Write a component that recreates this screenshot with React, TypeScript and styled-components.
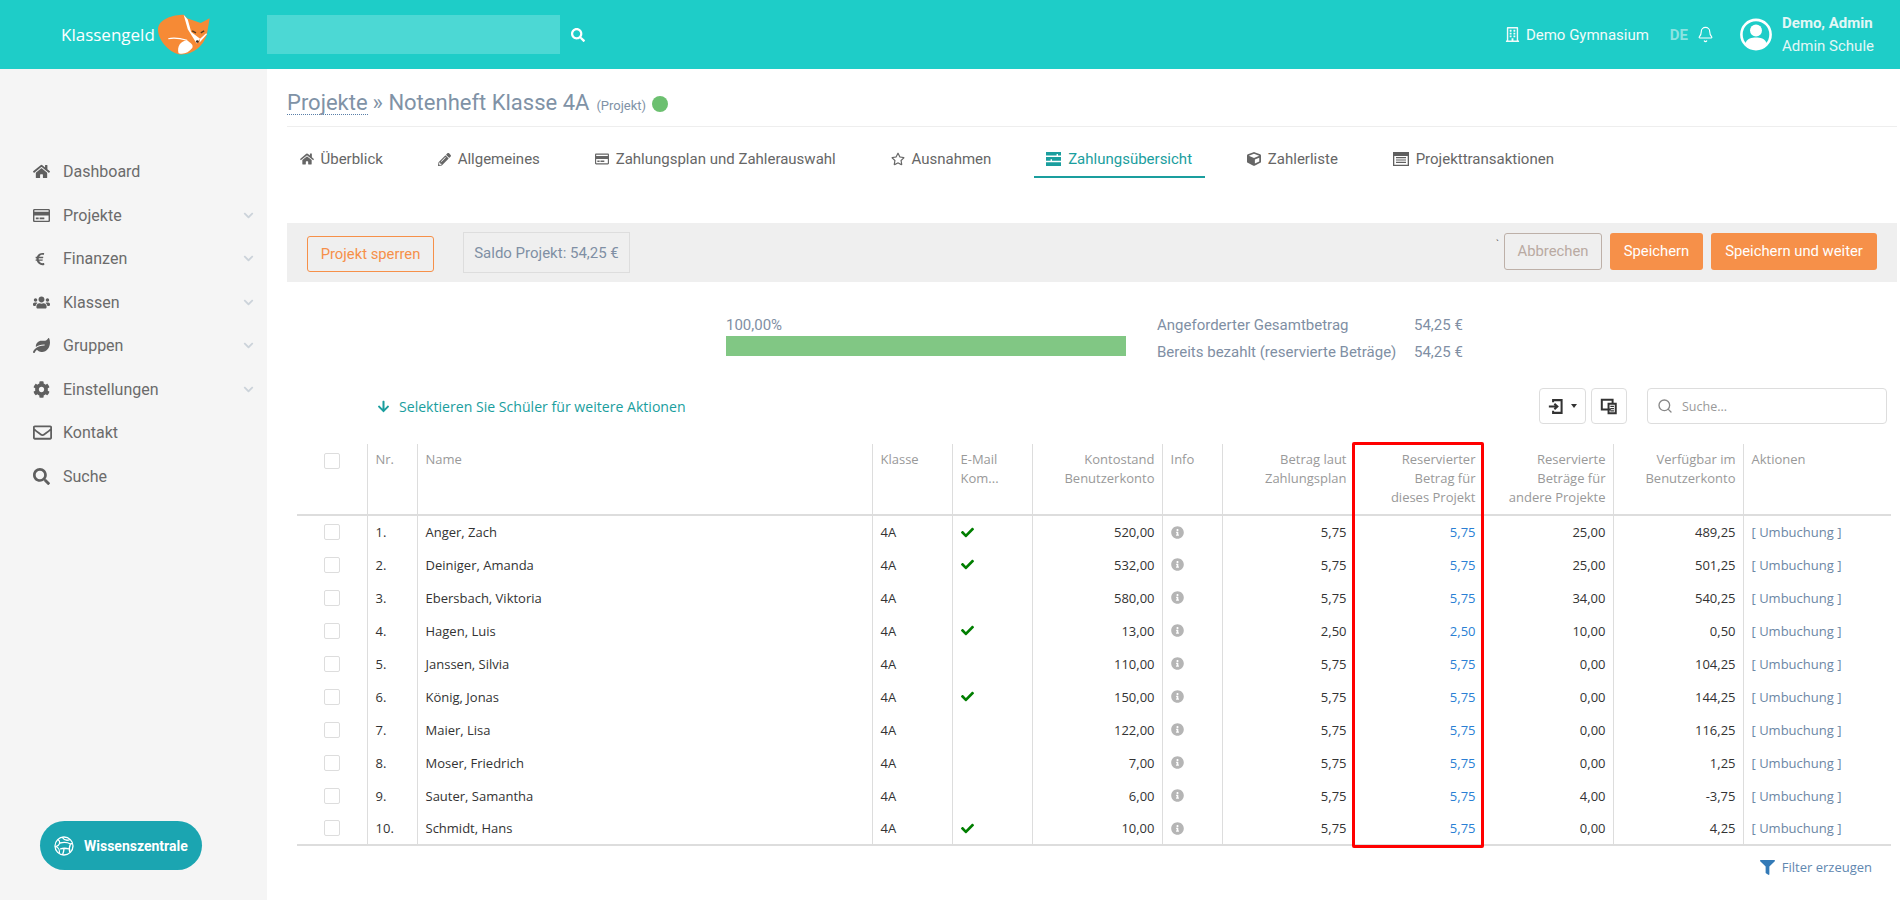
import * as React from "react";
import styled, { createGlobalStyle } from "styled-components";
import {
  FaArrowDown,
  FaCheck,
  FaChevronDown,
  FaCog,
  FaCube,
  FaEuroSign,
  FaFilter,
  FaHome,
  FaInfoCircle,
  FaLeaf,
  FaPencilAlt,
  FaRegBuilding,
  FaRegCreditCard,
  FaRegEnvelope,
  FaRegStar,
  FaSearch,
  FaUsers,
} from "react-icons/fa";
import { Bell, Search } from "lucide-react";

const GlobalStyle = createGlobalStyle`
  html, body {
    margin: 0;
    padding: 0;
    height: 100%;
    overflow: hidden;
    background: #fff;
    font-family: Roboto, "Liberation Sans", sans-serif;
  }
  * {
    box-sizing: border-box;
  }
`;

const Page = styled.div`
  width: 1900px;
  height: 900px;
  display: flex;
  flex-direction: column;
`;

const TopBar = styled.header`
  height: 69px;
  flex: none;
  display: flex;
  align-items: center;
  background: #1ecdc8;
  color: #fff;
`;

const Brand = styled.div`
  width: 267px;
  flex: none;
  display: flex;
  align-items: center;
  padding-left: 61px;
  gap: 3px;
  font-family: "Open Sans", sans-serif;
  font-size: 17px;
`;

const TopSearch = styled.div`
  width: 293px;
  height: 39px;
  background: #4cd8d4;
`;

const TopSearchIcon = styled.span`
  display: flex;
  margin-left: 11px;
  font-size: 14px;
`;

const TopRight = styled.div`
  margin-left: auto;
  display: flex;
  align-items: center;
  padding-right: 26px;
  font-size: 15px;
`;

const School = styled.div`
  display: flex;
  align-items: center;
  gap: 6px;
  color: #f2fbfa;
`;

const Lang = styled.span`
  margin-left: 21px;
  font-weight: 700;
  color: #8ce3e1;
`;

const BellSlot = styled.span`
  display: flex;
  margin-left: 9px;
`;

const UserBlock = styled.div`
  display: flex;
  align-items: center;
  margin-left: 26px;
  gap: 10px;
`;

const UserText = styled.div`
  line-height: 23px;
  color: #e3f7f6;
`;

const UserName = styled.div`
  font-weight: 700;
  font-size: 15px;
`;

const Layout = styled.div`
  flex: 1;
  display: flex;
  min-height: 0;
`;

const Sidebar = styled.aside`
  width: 267px;
  flex: none;
  display: flex;
  flex-direction: column;
  background: #f5f5f5;
  padding-top: 81px;
`;

const NavItem = styled.div`
  height: 43.5px;
  display: flex;
  align-items: center;
  padding-left: 33px;
  color: #6b6b6b;
  font-size: 16px;
`;

const NavIcon = styled.span`
  width: 30px;
  flex: none;
  display: flex;
  color: #5f5f5f;
  font-size: 17px;
`;

const NavChevron = styled.span`
  margin-left: auto;
  margin-right: 13px;
  display: flex;
  color: #ccd3da;
  font-size: 11px;
`;

const HelpButton = styled.div`
  margin: auto 0 30px 40px;
  width: 162px;
  height: 49px;
  display: flex;
  align-items: center;
  gap: 10px;
  padding-left: 14px;
  border-radius: 25px;
  background: #1ba5b1;
  color: #fff;
  font-size: 14px;
  font-weight: 700;
`;

const Main = styled.main`
  flex: 1;
  min-width: 0;
  padding: 0 3px 0 20px;
`;

const TitleRow = styled.div`
  height: 58px;
  display: flex;
  align-items: center;
  padding-top: 10px;
  border-bottom: 1px solid #eee;
  color: #8092a6;
  font-size: 22px;
`;

const TitleLink = styled.span`
  border-bottom: 1px dotted #5a7fa8;
  line-height: 23px;
`;

const TitleText = styled.span`
  margin-left: 5px;
`;

const TitleHint = styled.span`
  margin-left: 7px;
  margin-top: 5px;
  font-size: 13px;
`;

const StatusDot = styled.span`
  width: 16px;
  height: 16px;
  margin-left: 6px;
  margin-top: 2px;
  border-radius: 50%;
  background: #6cc070;
`;

const Tabs = styled.nav`
  height: 51px;
  display: flex;
  margin-bottom: 45px;
`;

const Tab = styled.div<{ $active?: boolean }>`
  display: flex;
  align-items: center;
  gap: 7px;
  height: 51px;
  padding: 15px 12.5px 0;
  margin-right: 29.8px;
  font-size: 15px;
  color: ${p => (p.$active ? "#1a9e9e" : "#666")};
  border-bottom: 2px solid ${p => (p.$active ? "#1a9e9e" : "transparent")};
`;

const TabIcon = styled.span`
  display: flex;
  font-size: 14px;
`;

const ActionBar = styled.div`
  height: 59px;
  display: flex;
  align-items: center;
  padding: 0 20px;
  background: #efefef;
`;

const OutlineButton = styled.div`
  width: 127px;
  height: 36px;
  margin-top: 2px;
  display: flex;
  align-items: center;
  justify-content: center;
  border: 1px solid #f69049;
  border-radius: 3px;
  color: #f69049;
  font-size: 14.8px;
`;

const Balance = styled.div`
  margin-left: 29px;
  width: 167px;
  height: 41px;
  display: flex;
  align-items: center;
  justify-content: center;
  border: 1px solid #ddd;
  color: #7f8fa4;
  font-size: 15px;
`;

const Tick = styled.span`
  margin-left: auto;
  margin-right: 5px;
  align-self: flex-start;
  margin-top: 16px;
  font-size: 10px;
  line-height: 12px;
  color: #555;
`;

const CancelButton = styled.div`
  width: 98px;
  height: 37px;
  margin-bottom: 3px;
  display: flex;
  align-items: center;
  justify-content: center;
  border: 1px solid #bdb0a8;
  border-radius: 3px;
  color: #b9aaa2;
  font-size: 14.8px;
`;

const SaveButton = styled.div<{ $wide?: boolean }>`
  width: ${p => (p.$wide ? "166px" : "93px")};
  height: 37px;
  margin-left: 8px;
  margin-bottom: 3px;
  display: flex;
  align-items: center;
  justify-content: center;
  border-radius: 3px;
  background: #f69049;
  color: #fff;
  font-size: 14.8px;
`;

const ProgressRow = styled.div`
  display: flex;
  padding: 33px 0 0 439px;
  height: 106px;
  color: #7f8fa4;
  font-size: 15px;
`;

const ProgressCol = styled.div`
  width: 400px;
`;

const ProgressLabel = styled.div`
  height: 21px;
  line-height: 20px;
`;

const ProgressTrack = styled.div`
  height: 20px;
  background: #81c784;
`;

const Totals = styled.div`
  margin-left: 31px;
  margin-top: -4px;
  height: 54px;
  display: grid;
  grid-template-columns: 257px auto;
  grid-auto-rows: 27px;
  align-items: center;
`;

const Toolbar = styled.div`
  height: 36px;
  display: flex;
  align-items: center;
  padding-left: 90px;
  font-family: "Open Sans", sans-serif;
`;

const SelectHint = styled.div`
  display: flex;
  align-items: center;
  gap: 9px;
  margin-right: auto;
  color: #1a9e9e;
  font-size: 14.1px;
`;

const ToolButton = styled.div<{ $w: number }>`
  width: ${p => p.$w}px;
  height: 36px;
  margin-left: 5px;
  display: flex;
  align-items: center;
  justify-content: center;
  gap: 6px;
  border: 1px solid #ddd;
  border-radius: 4px;
`;

const Caret = styled.span`
  border-left: 3.5px solid transparent;
  border-right: 3.5px solid transparent;
  border-top: 4px solid #333;
`;

const SearchBox = styled.div`
  width: 240px;
  height: 36px;
  margin-left: 20px;
  margin-right: 10px;
  display: flex;
  align-items: center;
  gap: 9px;
  padding-left: 9px;
  border: 1px solid #ddd;
  border-radius: 4px;
  color: #999;
  font-size: 12.5px;
`;

const TableWrap = styled.div`
  position: relative;
  margin: 20px 6px 0 10px;
`;

const Table = styled.table`
  width: 1594px;
  table-layout: fixed;
  border-collapse: collapse;
  font-family: "Open Sans", sans-serif;
  font-size: 13px;
  border-bottom: 2px solid #ddd;
`;

const Th = styled.th<{ $right?: boolean; $first?: boolean }>`
  height: 71px;
  padding: 6px ${p => (p.$right ? "7px" : "8px")} 0 8px;
  vertical-align: top;
  font-weight: 400;
  line-height: 19px;
  color: #999;
  text-align: ${p => (p.$right ? "right" : "left")};
  border-bottom: 2px solid #ddd;
  border-left: ${p => (p.$first ? "none" : "1px solid #ddd")};
`;

const Td = styled.td<{ $right?: boolean; $first?: boolean }>`
  height: 33px;
  padding: 0 ${p => (p.$right ? "7px" : "8px")} 0 8px;
  color: #333;
  text-align: ${p => (p.$right ? "right" : "left")};
  border-left: ${p => (p.$first ? "none" : "1px solid #ddd")};
`;

const Reserved = styled.span`
  color: #2a7fd4;
`;

const Rebook = styled.span`
  color: #6c87a5;
`;

const CheckBox = styled.span`
  display: block;
  width: 16px;
  height: 16px;
  margin-left: 19px;
  background: #fff;
  border: 1px solid #ddd;
  border-radius: 2px;
`;

const HeadCheckBox = styled(CheckBox)`
  margin-top: 3px;
`;

const StateIcon = styled.span<{ $color: string }>`
  display: block;
  height: 13px;
  font-size: 13px;
  line-height: 13px;
  color: ${p => p.$color};
`;

const Highlight = styled.div`
  position: absolute;
  left: 1055px;
  top: -2px;
  width: 132px;
  height: 406px;
  border: 3px solid #f00;
  border-radius: 2px;
  pointer-events: none;
`;

const FilterLink = styled.div`
  display: flex;
  justify-content: flex-end;
  align-items: center;
  gap: 7px;
  margin: 12px 25px 0 0;
  font-family: "Open Sans", sans-serif;
  font-size: 13px;
  color: #5f87b0;
`;

const FilterIcon = styled.span`
  display: flex;
  font-size: 15px;
  color: #337ab7;
`;

const FoxLogo = () => (
  <svg width="52" height="44" viewBox="25 16 152 122">
    <path
      d="M100 18C70 18 25 30 25 62C25 95 65 135 92 134C130 135 160 105 168 75L176 28L150 42L110 28Z"
      fill="#f68a35"
    />
    <path d="M100 18L112 60L138 102L148 88L122 68L112 32Z" fill="#fff" />
    <path d="M148 88L166 72L168 75L146 100Z" fill="#fff" />
    <path d="M85 130C80 110 90 95 110 92C120 100 130 105 125 115C115 128 100 135 85 130Z" fill="#fff" />
    <path d="M55 88C75 83 95 88 110 92" fill="none" stroke="#fff" strokeWidth="3" />
    <path d="M125 65L136 71M160 65L150 71" stroke="#5b3a1e" strokeWidth="4" />
    <circle cx="140" cy="96" r="4" fill="#3a2a1e" />
  </svg>
);

const Avatar = () => (
  <svg width="32" height="33" viewBox="0 0 32 33">
    <circle cx="16" cy="16.5" r="14.6" fill="none" stroke="#fff" strokeWidth="2.6" />
    <circle cx="16" cy="12.5" r="6" fill="#fff" />
    <path d="M5 26C7 20 12 19.5 16 19.5C20 19.5 25 20 27 26C24 29.5 20 31 16 31C12 31 8 29.5 5 26Z" fill="#fff" />
  </svg>
);

const GlobeMark = () => (
  <svg width="20" height="22" viewBox="0 0 20 22" fill="none" stroke="#fff" strokeWidth="1.3">
    <circle cx="10" cy="11" r="9" />
    <path d="M4 4.5C7 7 6 10 2 11.5C5 13 6 16 5 18.5M8 2C10 5 13 6 16 4.5M6 8C10 7 13 7 16.5 9L18.5 8.5M16.5 9C15 12 15 15 16 17.5M6 14C9 13 12 13 15.2 14M10 13.5C10 16 9 18 8.5 20" />
  </svg>
);

const SignInMark = () => (
  <svg width="17" height="17" viewBox="0 0 20 20" fill="none" stroke="#333" strokeWidth="2.4">
    <path d="M6 5V2.5H16V17.5H6V15" />
    <path d="M1 10H10.5M7.5 6.8L11 10L7.5 13.2" />
  </svg>
);

const CopyMark = () => (
  <svg width="18" height="18" viewBox="0 0 20 20" fill="none" stroke="#333" strokeWidth="2.2">
    <path d="M12 14H2V3H14V7" />
    <path d="M9.5 7.5H17.5V18H9.5Z" />
    <path d="M11.5 10.5H15.5M11.5 13H15.5M11.5 15.5H15.5" strokeWidth="1.4" />
  </svg>
);

const BarsMark = () => (
  <svg width="15" height="14" viewBox="0 0 15 14" fill="currentColor">
    <path d="M0 0H15V3.6H12V2H10.6V3.6H0ZM0 5H15V8.8H6V7.2H4.6V8.8H0ZM0 10.2H15V14H0Z" />
  </svg>
);

const ListMark = () => (
  <svg width="16" height="14" viewBox="0 0 16 14">
    <path d="M0 0H16V14H0ZM1.3 4V12.7H14.7V4Z" fill="#5f5f5f" fillRule="evenodd" />
    <path d="M3 5.6H13M3 8H13M3 10.4H13" stroke="#5f5f5f" strokeWidth="1.2" />
  </svg>
);

const navItems = [
  { label: "Dashboard", icon: <FaHome /> },
  { label: "Projekte", icon: <FaRegCreditCard />, sub: true },
  { label: "Finanzen", icon: <FaEuroSign size={14} />, sub: true },
  { label: "Klassen", icon: <FaUsers />, sub: true },
  { label: "Gruppen", icon: <FaLeaf />, sub: true },
  { label: "Einstellungen", icon: <FaCog />, sub: true },
  { label: "Kontakt", icon: <FaRegEnvelope size={19} /> },
  { label: "Suche", icon: <FaSearch /> },
];

const tabs = [
  { label: "Überblick", icon: <FaHome /> },
  { label: "Allgemeines", icon: <FaPencilAlt size={13} /> },
  { label: "Zahlungsplan und Zahlerauswahl", icon: <FaRegCreditCard /> },
  { label: "Ausnahmen", icon: <FaRegStar /> },
  { label: "Zahlungsübersicht", icon: <BarsMark />, active: true },
  { label: "Zahlerliste", icon: <FaCube /> },
  { label: "Projekttransaktionen", icon: <ListMark /> },
];

const columns = [70, 50, 455, 80, 80, 130, 60, 132, 129, 130, 130, 148];

const rows = [
  { name: "Anger, Zach", mail: true, balance: "520,00", plan: "5,75", other: "25,00", free: "489,25" },
  { name: "Deiniger, Amanda", mail: true, balance: "532,00", plan: "5,75", other: "25,00", free: "501,25" },
  { name: "Ebersbach, Viktoria", mail: false, balance: "580,00", plan: "5,75", other: "34,00", free: "540,25" },
  { name: "Hagen, Luis", mail: true, balance: "13,00", plan: "2,50", other: "10,00", free: "0,50" },
  { name: "Janssen, Silvia", mail: false, balance: "110,00", plan: "5,75", other: "0,00", free: "104,25" },
  { name: "König, Jonas", mail: true, balance: "150,00", plan: "5,75", other: "0,00", free: "144,25" },
  { name: "Maier, Lisa", mail: false, balance: "122,00", plan: "5,75", other: "0,00", free: "116,25" },
  { name: "Moser, Friedrich", mail: false, balance: "7,00", plan: "5,75", other: "0,00", free: "1,25" },
  { name: "Sauter, Samantha", mail: false, balance: "6,00", plan: "5,75", other: "4,00", free: "-3,75" },
  { name: "Schmidt, Hans", mail: true, balance: "10,00", plan: "5,75", other: "0,00", free: "4,25" },
];

const App = () => {
  return (
    <Page>
      <GlobalStyle />
      <TopBar>
        <Brand>
          Klassengeld
          <FoxLogo />
        </Brand>
        <TopSearch />
        <TopSearchIcon>
          <FaSearch />
        </TopSearchIcon>
        <TopRight>
          <School>
            <FaRegBuilding size={15} />
            Demo Gymnasium
          </School>
          <Lang>DE</Lang>
          <BellSlot>
            <Bell size={17} strokeWidth={1.6} />
          </BellSlot>
          <UserBlock>
            <Avatar />
            <UserText>
              <UserName>Demo, Admin</UserName>
              Admin Schule
            </UserText>
          </UserBlock>
        </TopRight>
      </TopBar>
      <Layout>
        <Sidebar>
          {navItems.map(item => (
            <NavItem key={item.label}>
              <NavIcon>{item.icon}</NavIcon>
              {item.label}
              {item.sub && (
                <NavChevron>
                  <FaChevronDown />
                </NavChevron>
              )}
            </NavItem>
          ))}
          <HelpButton>
            <GlobeMark />
            Wissenszentrale
          </HelpButton>
        </Sidebar>
        <Main>
          <TitleRow>
            <TitleLink>Projekte</TitleLink>
            <TitleText>» Notenheft Klasse 4A</TitleText>
            <TitleHint>(Projekt)</TitleHint>
            <StatusDot />
          </TitleRow>
          <Tabs>
            {tabs.map(t => (
              <Tab key={t.label} $active={t.active}>
                <TabIcon>{t.icon}</TabIcon>
                {t.label}
              </Tab>
            ))}
          </Tabs>
          <ActionBar>
            <OutlineButton>Projekt sperren</OutlineButton>
            <Balance>Saldo Projekt: 54,25 €</Balance>
            <Tick>`</Tick>
            <CancelButton>Abbrechen</CancelButton>
            <SaveButton>Speichern</SaveButton>
            <SaveButton $wide>Speichern und weiter</SaveButton>
          </ActionBar>
          <ProgressRow>
            <ProgressCol>
              <ProgressLabel>100,00%</ProgressLabel>
              <ProgressTrack />
            </ProgressCol>
            <Totals>
              <span>Angeforderter Gesamtbetrag</span>
              <span>54,25 €</span>
              <span>Bereits bezahlt (reservierte Beträge)</span>
              <span>54,25 €</span>
            </Totals>
          </ProgressRow>
          <Toolbar>
            <SelectHint>
              <FaArrowDown size={13} />
              Selektieren Sie Schüler für weitere Aktionen
            </SelectHint>
            <ToolButton $w={47}>
              <SignInMark />
              <Caret />
            </ToolButton>
            <ToolButton $w={36}>
              <CopyMark />
            </ToolButton>
            <SearchBox>
              <Search size={16} color="#888" />
              Suche...
            </SearchBox>
          </Toolbar>
          <TableWrap>
            <Table>
              <colgroup>
                {columns.map((w, i) => (
                  <col key={i} width={w} />
                ))}
              </colgroup>
              <thead>
                <tr>
                  <Th $first>
                    <HeadCheckBox />
                  </Th>
                  <Th>Nr.</Th>
                  <Th>Name</Th>
                  <Th>Klasse</Th>
                  <Th>E-Mail Kom...</Th>
                  <Th $right>
                    Kontostand
                    <br />
                    Benutzerkonto
                  </Th>
                  <Th>Info</Th>
                  <Th $right>
                    Betrag laut
                    <br />
                    Zahlungsplan
                  </Th>
                  <Th $right>
                    Reservierter
                    <br />
                    Betrag für
                    <br />
                    dieses Projekt
                  </Th>
                  <Th $right>
                    Reservierte
                    <br />
                    Beträge für
                    <br />
                    andere Projekte
                  </Th>
                  <Th $right>
                    Verfügbar im
                    <br />
                    Benutzerkonto
                  </Th>
                  <Th>Aktionen</Th>
                </tr>
              </thead>
              <tbody>
                {rows.map((r, i) => (
                  <tr key={r.name}>
                    <Td $first>
                      <CheckBox />
                    </Td>
                    <Td>{i + 1}.</Td>
                    <Td>{r.name}</Td>
                    <Td>4A</Td>
                    <Td>
                      {r.mail && (
                        <StateIcon $color="#007e00">
                          <FaCheck />
                        </StateIcon>
                      )}
                    </Td>
                    <Td $right>{r.balance}</Td>
                    <Td>
                      <StateIcon $color="#b5b5b5">
                        <FaInfoCircle />
                      </StateIcon>
                    </Td>
                    <Td $right>{r.plan}</Td>
                    <Td $right>
                      <Reserved>{r.plan}</Reserved>
                    </Td>
                    <Td $right>{r.other}</Td>
                    <Td $right>{r.free}</Td>
                    <Td>
                      <Rebook>[ Umbuchung ]</Rebook>
                    </Td>
                  </tr>
                ))}
              </tbody>
            </Table>
            <Highlight />
          </TableWrap>
          <FilterLink>
            <FilterIcon>
              <FaFilter />
            </FilterIcon>
            Filter erzeugen
          </FilterLink>
        </Main>
      </Layout>
    </Page>
  );
};

export default App;
